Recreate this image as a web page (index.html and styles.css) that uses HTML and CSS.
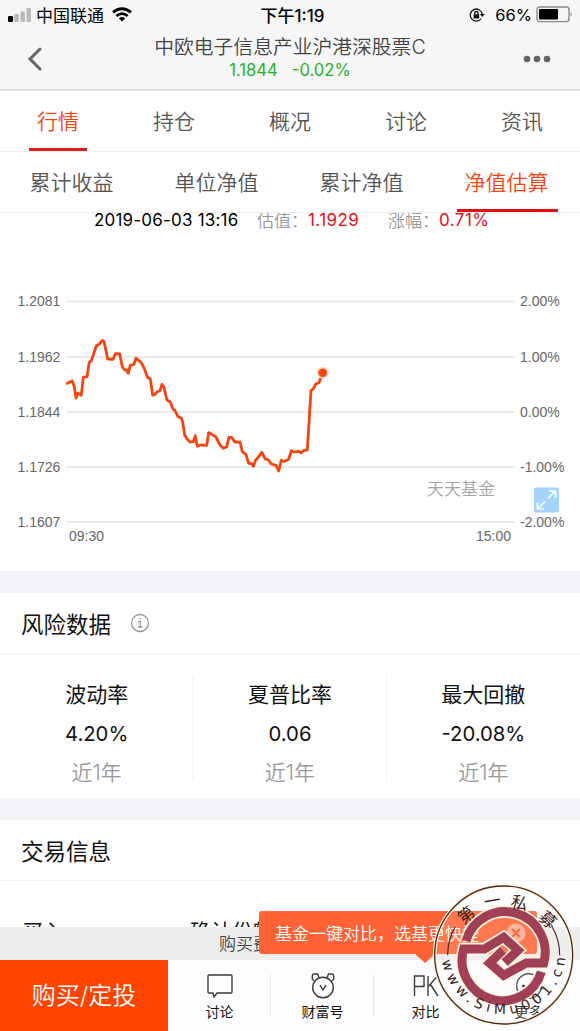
FILE: index.html
```html
<!DOCTYPE html>
<html lang="zh-CN">
<head>
  <meta charset="UTF-8" />
  <meta name="viewport" content="width=device-width, initial-scale=1.0" />
  <title>中欧电子信息产业沪港深股票C</title>
  <link rel="stylesheet" href="styles.css">
</head>
<body>

  <header>
    <div class="status">
      <div class="carrier">
        <svg width="24" height="14" viewBox="0 0 24 14">
          <rect x="0" y="8" width="5" height="6" rx="1.2" fill="#000" />
          <rect x="6.2" y="6" width="4.6" height="8" rx="1.2" fill="#b9b9b9" />
          <rect x="12.4" y="3.5" width="4.6" height="10.5" rx="1.2" fill="#b9b9b9" />
          <rect x="18.4" y="0" width="4.6" height="14" rx="1.2" fill="#b9b9b9" />
        </svg>
        <span>中国联通</span>
        <svg class="wifi" width="20" height="15" viewBox="0 0 20 15" fill="none" stroke="#000" stroke-width="2.8">
          <path d="M1 5.4Q10-2 19 5.4M4.3 9Q10 4.2 15.7 9" />
          <path d="M10 14.4L6.9 11.2Q10 8.8 13.1 11.2Z" fill="#000" stroke="none" />
        </svg>
      </div>
      <div class="clock">下午1:19</div>
      <div class="power">
        <svg width="16" height="14" viewBox="0 0 16 14" fill="none" stroke="#111" stroke-width="1.3">
          <path d="M12.2 10.5A6 6 0 1 1 13.2 6" />
          <path d="M10.8 6H15.8L13.3 9Z" fill="#111" stroke="none" />
          <rect x="4.6" y="6.3" width="5.6" height="4.2" rx=".5" fill="#111" stroke="none" />
          <path d="M5.7 6.5V5.2A1.7 1.7 0 0 1 9.1 5.2V6.5" />
        </svg>
        <span>66%</span>
        <svg class="battery" width="37" height="17" viewBox="0 0 37 17">
          <rect x="1" y="1" width="32" height="14.6" rx="2.5" fill="none" stroke="#8a8a8a" stroke-width="1.4" />
          <rect x="3" y="3" width="19" height="10.6" rx="1" fill="#000" />
          <path d="M34.5 6Q37 8.3 34.5 10.6Z" fill="#8a8a8a" />
        </svg>
      </div>
    </div>
    <div class="navbar">
      <svg class="back" width="16" height="26" viewBox="0 0 16 26" fill="none" stroke="#666" stroke-width="3" stroke-linecap="round"><path d="M13 3L3 13L13 23" /></svg>
      <div class="fund">
        <h1>中欧电子信息产业沪港深股票C</h1>
        <p><span>1.1844</span><span>-0.02%</span></p>
      </div>
      <svg class="more" width="28" height="8" viewBox="0 0 28 8" fill="#666"><circle cx="4" cy="4" r="3.3" /><circle cx="14" cy="4" r="3.3" /><circle cx="24" cy="4" r="3.3" /></svg>
    </div>
  </header>

  <nav class="tabs">
    <a class="active">行情</a><a>持仓</a><a>概况</a><a>讨论</a><a>资讯</a>
  </nav>
  <nav class="tabs subtabs">
    <a>累计收益</a><a>单位净值</a><a>累计净值</a><a class="active">净值估算</a>
  </nav>

  <main>
    <section class="estimate">
      <div class="quote">
        <time>2019-06-03 13:16</time>
        <label>估值：</label><b>1.1929</b>
        <label class="rise">涨幅：</label><b>0.71%</b>
      </div>
      <svg class="chart" width="580" height="310" viewBox="0 260 580 310">
        <path class="grid" d="M67 301.5H514M67 357H514M67 412H514M67 467H514M67 522H514" />
        <g class="axis">
          <text x="17.5" y="306.3">1.2081</text>
          <text x="17.5" y="361.8">1.1962</text>
          <text x="17.5" y="417">1.1844</text>
          <text x="17.5" y="472">1.1726</text>
          <text x="17.5" y="527">1.1607</text>
          <text x="520" y="306.3">2.00%</text>
          <text x="520" y="361.8">1.00%</text>
          <text x="520" y="417">0.00%</text>
          <text x="520" y="472">-1.00%</text>
          <text x="69" y="541">09:30</text>
          <text x="476" y="541">15:00</text>
        </g>
        <text class="source" x="427" y="495">天天基金</text>
        <polyline class="line" points="67.3,383.3 72.3,381 74.3,386.7 76,398 78,393.3 81.3,395.3 83.3,377.3 87,376.7 89.3,362.3 91.3,360.7 96.3,346 99,344.3 102.3,340.5 104,341.3 107.7,359 113,359.3 115.3,353.7 119.7,354 122.3,366.7 124.7,370 126.5,370 128.3,373.3 130.3,365.3 133.7,364.7 136,358.3 141,362.3 144.3,368.3 147.3,377 150.3,379 152.7,395 154.7,394.7 157.3,391.7 160,390.7 162,384.3 163.7,386.7 167,400 170.3,402 173,409.3 174.7,410 178,416.7 181.3,418 182.7,422.3 184.7,435 187.3,439.3 190,442 193.3,441.7 195.3,435.7 197.3,446.3 200.7,445 206.7,445.3 208.7,432.7 212,434.3 216,437 220,445 223.3,448.3 226.7,446.7 229,437.3 231.7,437.3 234.7,442 240,442 242.3,451.7 246,454.7 248.7,463.3 251.3,463.3 253.3,466.3 255.7,460 258.5,457 261.7,452.3 265.3,459 268,459.7 271.3,464 276,465.3 278.7,471 281.3,460.3 284,461.5 288.7,459.3 291.3,450.7 294,452 299,451.3 301,453 304,450.3 307.3,450 311,390.7 313.7,388.3 315.7,384 319,382.7 322.7,372.7" />
        <circle cx="322.7" cy="372.7" r="6" fill="#fdd5c5" />
        <circle cx="322.7" cy="372.7" r="4.3" fill="#f4440f" />
        <rect x="534" y="487.5" width="25" height="25" rx="2" fill="#a3d3fa" />
        <path d="M548 498.5L555.5 491M549 491H555.5V497.5M545 501.5L537.5 509M537.5 502.5V509H544" fill="none" stroke="#fff" stroke-width="1.7" />
        <text class="axis" x="520" y="527">-2.00%</text>
      </svg>
    </section>

    <section class="card">
      <h2>风险数据
        <svg width="20" height="20" viewBox="0 0 20 20" fill="none" stroke="#999" stroke-width="1.3"><circle cx="10" cy="10" r="8.5" /><path d="M8 8.7H10.3V14M8 14H12.5M10.2 5V6.6" /></svg>
      </h2>
      <ul class="metrics">
        <li><span>波动率</span><strong>4.20%</strong><small>近1年</small></li>
        <li><span>夏普比率</span><strong>0.06</strong><small>近1年</small></li>
        <li><span>最大回撤</span><strong>-20.08%</strong><small>近1年</small></li>
      </ul>
    </section>

    <section class="card trade">
      <h2>交易信息</h2>
      <div class="row"><span>买入</span><span>确认份额</span></div>
    </section>
  </main>

  <footer>
    <div class="fee">购买费率</div>
    <div class="toolbar">
      <a class="buy">购买/定投</a>
      <a>
        <svg width="28" height="28" viewBox="0 0 28 28"><path d="M3 3H25Q26 3 26 4V20Q26 21 25 21H11L8 25L6.8 21H3Q2 21 2 20V4Q2 3 3 3Z" /></svg>
        讨论
      </a>
      <a>
        <svg width="28" height="28" viewBox="0 0 28 28"><circle cx="14" cy="15.5" r="10.3" /><path d="M3.3 7.5V4Q3.3 2 5.5 2H8.5L10 5.8M3.3 7.5L5.5 9M24.7 7.5V4Q24.7 2 22.5 2H19.5L18 5.8M24.7 7.5L22.5 9M11 13L14 18L17 13" /></svg>
        财富号
      </a>
      <a>
        <svg width="28" height="28" viewBox="0 0 28 28"><path d="M2.5 24V4H12V14.5H2.5M16 4V24M25.5 4L16 15M18.5 12.5L26 24" /></svg>
        对比
      </a>
      <a>
        <svg width="28" height="28" viewBox="0 0 28 28"><circle cx="14" cy="14" r="12.3" /><g fill="#333" stroke="none"><circle cx="8.5" cy="14" r="1.6" /><circle cx="14" cy="14" r="1.6" /><circle cx="19.5" cy="14" r="1.6" /></g></svg>
        更多
      </a>
    </div>
    <div class="tip">
      <span>基金一键对比，选基更快捷</span>
      <svg width="20" height="20" viewBox="0 0 20 20"><circle cx="10" cy="10" r="9.5" fill="#ffab8f" /><path d="M6 6L14 14M14 6L6 14" stroke="#f4501f" stroke-width="2" /></svg>
    </div>
  </footer>

  <svg class="seal" width="144" height="144" viewBox="50 24 432 432">
    <circle cx="265" cy="240" r="207" fill="#fff9e8" fill-opacity=".15" stroke="#fff6dc" stroke-width="11" />
    <circle cx="265" cy="240" r="207" fill="none" stroke="#4c2a20" stroke-width="4" />
    <path d="M97 241A168 168 0 0 1 121 153M433 241A168 168 0 0 0 409 153" fill="none" stroke="#4c2a20" stroke-width="3.5" />
    <defs>
      <path id="markTop" d="M152 198A121 121 0 0 1 385 264H333L265 301L223 264L263 226" />
      <path id="markBottom" d="M378 290A121 121 0 0 1 145 222H207L265 187L308 226L268 263" />
      <path id="sealArc" d="M80 250A186 186 0 0 0 450 250" />
    </defs>
    <g class="mark-glow"><use href="#markTop" /><use href="#markBottom" /></g>
    <g class="mark"><use href="#markTop" /><use href="#markBottom" /></g>
    <g class="seal-text">
      <text transform="translate(152 119) rotate(-38)" y="19">第</text>
      <text transform="translate(231 77) rotate(-10)" y="19">一</text>
      <text transform="translate(313 83) rotate(14)" y="19">私</text>
      <text transform="translate(398 133) rotate(42)" y="19">募</text>
    </g>
    <text class="seal-url"><textPath href="#sealArc" startOffset="8">www.SiMu001.cn</textPath></text>
  </svg>

</body>
</html>
```
FILE: styles.css
```css
body {
  margin: 0;
  width: 580px;
  height: 1031px;
  overflow: hidden;
  display: flex;
  flex-direction: column;
  position: relative;
  font-family: Inter, "Noto Sans CJK SC", sans-serif;
  font-weight: 350;
  background: #fff;
  color: #111;
}

svg {
  display: block;
  flex: none;
}

header {
  height: 91px;
  box-sizing: border-box;
  background: #f6f6f6;
  border-bottom: 2px solid #dfdfdf;
}

.status {
  height: 29px;
  display: grid;
  grid-template-columns: 1fr auto 1fr;
  align-items: center;
  padding: 0 7px 0 8px;
  font-size: 17px;
  font-weight: 400;
  color: #000;
}

.carrier,
.power {
  display: flex;
  align-items: center;
  gap: 4px;
}

.wifi {
  margin-left: 4px;
}

.clock {
  font-weight: 500;
  padding-left: 4px;
}

.power {
  justify-content: flex-end;
}

.power span {
  margin-left: 6px;
  font-size: 16.5px;
}

.navbar {
  display: flex;
  align-items: center;
  justify-content: space-between;
  height: 60px;
  padding: 0 29px 0 27px;
}

.fund {
  text-align: center;
  padding-left: 14px;
}

h1 {
  margin: 0;
  font-size: 19.8px;
  line-height: 26px;
  font-weight: 350;
  color: #444;
}

.fund p {
  margin: 0 0 5px;
  display: flex;
  justify-content: center;
  gap: 14px;
  font-size: 16.6px;
  line-height: 20px;
  font-weight: 400;
  color: #2bb02b;
}

.tabs {
  display: flex;
  height: 61px;
  box-sizing: border-box;
  border-bottom: 1px solid #eee;
  font-size: 21px;
  color: #555;
}

.tabs a {
  flex: 1;
  text-align: center;
  line-height: 61px;
  position: relative;
}

.tabs .active {
  color: #f4440f;
}

.tabs .active::after {
  content: "";
  position: absolute;
  left: 29px;
  right: 29px;
  bottom: 0;
  height: 3px;
  background: #d8201d;
  z-index: 1;
}

.subtabs a {
  left: -1px;
}

.subtabs .active::after {
  left: 23px;
  right: 21px;
  bottom: 0;
  background: #e0100f;
}

main {
  flex: 1;
  overflow: hidden;
  min-height: 0;
}

.estimate {
  height: 358px;
}

.quote {
  display: flex;
  align-items: center;
  height: 13px;
  padding-left: 94px;
  font-size: 17px;
  font-weight: 400;
  white-space: nowrap;
}

.quote time {
  width: 163px;
  letter-spacing: 0.2px;
  color: #000;
}

.quote label {
  width: 51px;
  color: #999;
  font-weight: 350;
}

.quote .rise {
  margin-left: 29px;
}

.quote b {
  font-weight: 400;
  letter-spacing: 0.4px;
  color: #e0101c;
}

.chart {
  margin-top: 34px;
}

.grid {
  stroke: #e2e4e4;
  stroke-width: 1.4;
}

.axis {
  font: 14px "Liberation Sans", sans-serif;
  fill: #666;
}

.source {
  font-size: 17px;
  fill: #a5a5a5;
}

.line {
  fill: none;
  stroke: #f4440f;
  stroke-width: 2.8;
  stroke-linejoin: round;
  stroke-linecap: round;
}

.card {
  border-top: 22px solid #f3f3f8;
}

h2 {
  margin: 0;
  display: flex;
  align-items: center;
  gap: 19px;
  height: 61px;
  box-sizing: border-box;
  padding: 0 0 1px 21px;
  font-size: 22.5px;
  font-weight: 400;
  border-bottom: 1px solid #f3f3f3;
  color: #111;
}

.metrics {
  list-style: none;
  margin: 0;
  padding: 21px 0 17px;
  display: flex;
}

.metrics li {
  flex: 1;
  height: 106px;
  display: flex;
  flex-direction: column;
  align-items: center;
  font-size: 21px;
  line-height: 39px;
}

.metrics li + li {
  box-shadow: -1px 0 #f3f3f3;
}

.metrics span,
.metrics strong {
  font-weight: 400;
}

.metrics strong {
  font-size: 20.3px;
}

.metrics small {
  font-size: 21px;
  color: #999;
}

.row {
  display: grid;
  grid-template-columns: 168px 1fr;
  padding: 36px 0 0 22px;
  font-size: 21px;
  line-height: 30px;
  font-weight: 400;
}

footer {
  height: 104px;
  position: relative;
}

.fee {
  height: 33px;
  padding-left: 219px;
  background: #ededed;
  font-size: 17px;
  line-height: 34px;
  color: #444;
}

.toolbar {
  display: flex;
  height: 71px;
  background: #fdfdff;
}

.toolbar a {
  flex: 1;
  display: flex;
  flex-direction: column;
  align-items: center;
  padding-top: 12px;
  font-size: 14px;
  line-height: 24px;
  font-weight: 400;
  background: linear-gradient(#e8e8ea, #e8e8ea) right 14px / 1px 42px no-repeat;
}

.toolbar a:last-child {
  background: none;
}

.toolbar .buy {
  flex: 0 0 168px;
  padding: 0;
  justify-content: center;
  font-size: 24px;
  font-weight: 350;
  color: #fff;
  background: #ff4400;
}

.toolbar svg {
  fill: none;
  stroke: #3c3c3c;
  stroke-width: 1.4;
}

.tip {
  position: absolute;
  left: 259px;
  top: -16px;
  width: 278px;
  height: 43px;
  box-sizing: border-box;
  padding: 0 11px 0 16px;
  display: flex;
  align-items: center;
  justify-content: space-between;
  background: #ff6234;
  border-radius: 3px;
  color: #fff;
  font-size: 17px;
  white-space: nowrap;
}

.tip::after {
  content: "";
  position: absolute;
  left: 155px;
  top: 42px;
  border: 11px solid transparent;
  border-top: 10px solid #ff6234;
  border-bottom: 0;
}

.seal {
  position: absolute;
  left: 432px;
  top: 883px;
}

.mark-glow,
.mark {
  fill: none;
}

.mark-glow {
  stroke: #fff6dc;
  stroke-width: 37;
}

.mark {
  stroke: #a03f56;
  stroke-width: 27;
}

.seal-text {
  font: 400 50px "Noto Sans CJK SC", sans-serif;
  text-anchor: middle;
  fill: #3a211b;
}

.seal-url {
  font: 42px "DejaVu Sans", sans-serif;
  letter-spacing: 14px;
  fill: #3a211b;
}
```
